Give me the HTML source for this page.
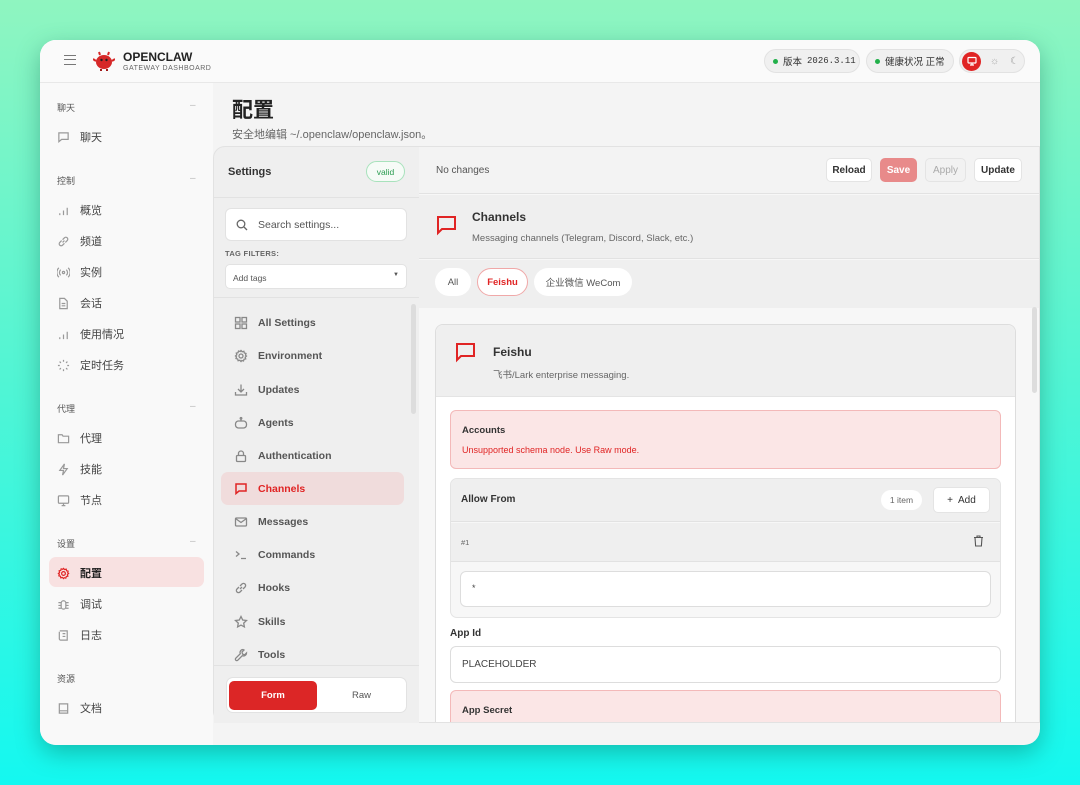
<!DOCTYPE html>
<html><head><meta charset="utf-8"><style>
*{box-sizing:border-box;margin:0;padding:0}
body{width:1080px;height:785px;overflow:hidden;background:linear-gradient(180deg,#8ff5c0 0%,#4ff5d5 50%,#14f8f0 100%);font-family:"Liberation Sans","Noto Sans CJK SC",sans-serif;position:relative}
.win{position:absolute;left:40px;top:40px;width:1000px;height:705px;background:#f4f4f4;border-radius:16px;overflow:hidden;box-shadow:0 8px 24px rgba(0,80,60,.35)}
.hdr{position:absolute;left:0;top:0;width:1000px;height:43px;background:#fafafa;border-bottom:1px solid #e8e8e8}
.side{position:absolute;left:0;top:-3px;width:173px;height:708px;background:#f9f9f9}
.a{position:absolute;white-space:nowrap}
.sec{font-size:9px;color:#555;left:17px}
.dash{left:150px;color:#bbb;font-size:10px}
.it{left:17px;font-size:11px;color:#444;display:flex;align-items:center;gap:10px}
.it svg{width:13px;height:13px;stroke:#999;fill:none;stroke-width:1.3}
.pill{position:absolute;height:24px;border-radius:12px;background:#f0f0f0;border:1px solid #e2e2e2;font-size:9.5px;color:#333;display:flex;align-items:center;padding:0 6px 0 8px;gap:5px;white-space:nowrap}
.dot{width:5px;height:5px;border-radius:50%;background:#22b04a;flex:none}
.btn{position:absolute;height:24px;border-radius:5px;background:#fff;border:1px solid #e4e4e4;font-size:10px;color:#333;display:flex;align-items:center;justify-content:center;font-weight:bold}
.nav{position:absolute;left:20px;font-size:10.5px;color:#555;display:flex;align-items:center;gap:10px;font-weight:bold}
.nav svg{width:14px;height:14px;stroke:#888;fill:none;stroke-width:1.3}
</style></head><body>
<div class="win">
<div class="side">
 <div class="a sec" style="top:64px">聊天</div><div class="a dash" style="top:63px">–</div>
 <div class="a it" style="top:92px"><svg viewBox="0 0 14 14"><path d="M2 2h10v7H5l-3 2.5z"/></svg>聊天</div>
 <div class="a sec" style="top:137px">控制</div><div class="a dash" style="top:136px">–</div>
 <div class="a it" style="top:165px"><svg viewBox="0 0 14 14"><path d="M3 12v-2M7 12V7M11 12V4"/></svg>概览</div>
 <div class="a it" style="top:196px"><svg viewBox="0 0 14 14"><path d="M6 8l2-2M5 6L3 8a2 2 0 003 3l2-2M9 8l2-2a2 2 0 00-3-3L6 5"/></svg>频道</div>
 <div class="a it" style="top:227px"><svg viewBox="0 0 14 14"><circle cx="7" cy="7" r="1.2"/><path d="M4 4a4 4 0 000 6M10 4a4 4 0 010 6M2 2a7 7 0 000 10M12 2a7 7 0 010 10"/></svg>实例</div>
 <div class="a it" style="top:258px"><svg viewBox="0 0 14 14"><path d="M3 1.5h5l3 3v8H3zM5 7h4M5 9.5h4"/></svg>会话</div>
 <div class="a it" style="top:289px"><svg viewBox="0 0 14 14"><path d="M3 12v-2M7 12V7M11 12V4"/></svg>使用情况</div>
 <div class="a it" style="top:320px"><svg viewBox="0 0 14 14"><path d="M7 1v2M7 11v2M1 7h2M11 7h2M2.8 2.8l1.4 1.4M9.8 9.8l1.4 1.4M2.8 11.2l1.4-1.4M9.8 4.2l1.4-1.4"/></svg>定时任务</div>
 <div class="a sec" style="top:365px">代理</div><div class="a dash" style="top:364px">–</div>
 <div class="a it" style="top:393px"><svg viewBox="0 0 14 14"><path d="M1.5 3h4l1 1.5h6v7h-11z"/></svg>代理</div>
 <div class="a it" style="top:424px"><svg viewBox="0 0 14 14"><path d="M8 1L3 8h4l-1 5 5-7H7z"/></svg>技能</div>
 <div class="a it" style="top:455px"><svg viewBox="0 0 14 14"><rect x="1.5" y="2" width="11" height="8" rx="1"/><path d="M7 10v2M5 12.5h4"/></svg>节点</div>
 <div class="a sec" style="top:500px">设置</div><div class="a dash" style="top:499px">–</div>
 <div class="a" style="left:9px;top:520px;width:155px;height:30px;border-radius:7px;background:#f8e1e1"></div>
 <div class="a it" style="top:528px;color:#222;font-weight:bold"><svg viewBox="0 0 14 14" style="stroke:#e02424"><circle cx="7" cy="7" r="2"/><path d="M7 1.5l1.2 1.3 1.7-.5.4 1.7 1.7.5-.5 1.7L12.5 7l-1.3 1.2.5 1.7-1.7.4-.5 1.7-1.7-.5L7 12.5l-1.2-1.3-1.7.5-.4-1.7-1.7-.5.5-1.7L1.5 7l1.3-1.2-.5-1.7 1.7-.4.5-1.7 1.7.5z"/></svg>配置</div>
 <div class="a it" style="top:559px"><svg viewBox="0 0 14 14"><rect x="4.5" y="3" width="5" height="9" rx="2.5"/><path d="M1.5 5h3M9.5 5h3M1.5 8h3M9.5 8h3M1.5 11h3M9.5 11h3"/></svg>调试</div>
 <div class="a it" style="top:590px"><svg viewBox="0 0 14 14"><path d="M3 2h8v10H4a1.5 1.5 0 01-1.5-1.5V3M6 5h3M6 8h3"/></svg>日志</div>
 <div class="a sec" style="top:635px">资源</div>
 <div class="a it" style="top:663px"><svg viewBox="0 0 14 14"><path d="M2.5 2h9v10h-9zM2.5 9.5h9"/></svg>文档</div>
</div>
<div class="hdr">
 <div class="a" style="left:24px;top:15px;width:12px;height:10px;border-top:1.5px solid #777;border-bottom:1.5px solid #777"><div style="margin-top:3px;border-top:1.5px solid #777"></div></div>
 <svg class="a" style="left:53px;top:10px" width="22" height="22" viewBox="0 0 22 22"><ellipse cx="11" cy="12" rx="8" ry="7" fill="#d62828"/><path d="M3 11 L0 9 M19 11 L22 9 M7 5 L6 2 M15 5 L16 2" stroke="#d62828" stroke-width="2"/><circle cx="8.5" cy="10" r="1.2" fill="#222"/><circle cx="13.5" cy="10" r="1.2" fill="#222"/><path d="M8 19 v2 M14 19 v2" stroke="#a01818" stroke-width="2"/></svg>
 <div class="a" style="left:83px;top:10px;font-size:12px;font-weight:bold;color:#222">OPENCLAW</div>
 <div class="a" style="left:83px;top:25px;font-size:7px;color:#666;letter-spacing:.5px">GATEWAY DASHBOARD</div>
 <div class="pill" style="left:724px;top:9px;width:96px"><span class="dot"></span><span>版本</span><span style="font-family:'Liberation Mono',monospace;font-size:9px">2026.3.11</span></div>
 <div class="pill" style="left:826px;top:9px;width:88px"><span class="dot"></span>健康状况&nbsp;正常</div>
 <div class="pill" style="left:919px;top:9px;width:66px;padding:0 2px">
  <div style="width:19px;height:19px;border-radius:50%;background:#e02424;display:flex;align-items:center;justify-content:center;flex:none"><svg width="10" height="10" viewBox="0 0 10 10" fill="none" stroke="#fff" stroke-width="1.2"><rect x="1" y="1.5" width="8" height="5.5" rx=".8"/><path d="M5 7v2M3 9h4"/></svg></div>
  <span style="color:#aaa;font-size:10px;margin-left:4px">☼</span><span style="color:#999;font-size:10px;margin-left:6px">☾</span></div>
</div>
<div class="a" style="left:192px;top:54px;font-size:21px;font-weight:bold;color:#222">配置</div>
<div class="a" style="left:192px;top:86px;font-size:11px;color:#666">安全地编辑 ~/.openclaw/openclaw.json。</div>
<!-- settings panel -->
<div class="a" style="left:173px;top:106px;width:207px;height:577px;background:#efefef;border:1px solid #e2e2e2;border-radius:12px 0 0 12px">
 <div class="a" style="left:14px;top:19px;font-size:11px;color:#333;font-weight:bold">Settings</div>
 <div class="a" style="left:152px;top:14px;width:39px;height:21px;border:1px solid #a8e2bc;border-radius:11px;font-size:8.5px;color:#2a9c50;display:flex;align-items:center;justify-content:center;background:#f6fbf7">valid</div>
 <div class="a" style="left:0;top:50px;width:205px;border-top:1px solid #e2e2e2"></div>
 <div class="a" style="left:11px;top:61px;width:182px;height:33px;background:#fff;border:1px solid #e2e2e2;border-radius:6px;display:flex;align-items:center;padding-left:10px;gap:10px;font-size:10.5px;color:#555"><svg width="12" height="12" viewBox="0 0 12 12" fill="none" stroke="#666" stroke-width="1.3"><circle cx="5" cy="5" r="3.8"/><path d="M8 8l3 3"/></svg>Search settings...</div>
 <div class="a" style="left:11px;top:102px;font-size:7.5px;color:#666;font-weight:bold;letter-spacing:.3px">TAG FILTERS:</div>
 <div class="a" style="left:11px;top:117px;width:182px;height:25px;background:#fff;border:1px solid #e2e2e2;border-radius:5px;font-size:8.5px;color:#555;padding:8px 7px">Add tags<span style="position:absolute;right:7px;top:7px;font-size:6px">▼</span></div>
 <div class="a" style="left:0;top:150px;width:205px;border-top:1px solid #e2e2e2"></div>
 <div class="a" style="left:197px;top:157px;width:5px;height:110px;background:#ddd;border-radius:3px"></div>
 <div class="nav" style="top:169px"><svg viewBox="0 0 14 14"><rect x="1.5" y="1.5" width="4.5" height="4.5"/><rect x="8" y="1.5" width="4.5" height="4.5"/><rect x="1.5" y="8" width="4.5" height="4.5"/><rect x="8" y="8" width="4.5" height="4.5"/></svg>All Settings</div>
 <div class="nav" style="top:202px"><svg viewBox="0 0 14 14"><circle cx="7" cy="7" r="2"/><path d="M7 1.5l1.2 1.3 1.7-.5.4 1.7 1.7.5-.5 1.7L12.5 7l-1.3 1.2.5 1.7-1.7.4-.5 1.7-1.7-.5L7 12.5l-1.2-1.3-1.7.5-.4-1.7-1.7-.5.5-1.7L1.5 7l1.3-1.2-.5-1.7 1.7-.4.5-1.7 1.7.5z"/></svg>Environment</div>
 <div class="nav" style="top:236px"><svg viewBox="0 0 14 14"><path d="M7 1.5v7M4 6l3 3 3-3M1.5 9v3h11V9"/></svg>Updates</div>
 <div class="nav" style="top:269px"><svg viewBox="0 0 14 14"><rect x="1.5" y="5" width="11" height="7" rx="3"/><path d="M7 5V3"/><circle cx="7" cy="2.3" r=".8"/></svg>Agents</div>
 <div class="nav" style="top:302px"><svg viewBox="0 0 14 14"><rect x="2.5" y="6.5" width="9" height="6" rx="1"/><path d="M4.5 6.5V4.5a2.5 2.5 0 015 0v2"/></svg>Authentication</div>
 <div class="a" style="left:7px;top:325px;width:183px;height:33px;background:#f0dcdc;border-radius:7px"></div>
 <div class="nav" style="top:335px;color:#e02424"><svg viewBox="0 0 14 14" style="stroke:#e02424;stroke-width:1.5"><path d="M2 2h10v7H5l-3 2.5z"/></svg>Channels</div>
 <div class="nav" style="top:368px"><svg viewBox="0 0 14 14"><rect x="1.5" y="3" width="11" height="8" rx="1"/><path d="M1.5 3.5L7 7.5l5.5-4"/></svg>Messages</div>
 <div class="nav" style="top:401px"><svg viewBox="0 0 14 14"><path d="M2 3.5l3 2.5-3 2.5M7 10.5h5"/></svg>Commands</div>
 <div class="nav" style="top:434px"><svg viewBox="0 0 14 14"><path d="M6 8l2-2M5 6L3 8a2 2 0 003 3l2-2M9 8l2-2a2 2 0 00-3-3L6 5"/></svg>Hooks</div>
 <div class="nav" style="top:468px"><svg viewBox="0 0 14 14"><path d="M7 1.5l1.7 3.5 3.8.5-2.8 2.6.7 3.8L7 10.1 3.6 11.9l.7-3.8L1.5 5.5l3.8-.5z"/></svg>Skills</div>
 <div class="nav" style="top:501px"><svg viewBox="0 0 14 14"><path d="M9 1.5a3 3 0 00-2.7 4.2L1.8 10.2a1.3 1.3 0 002 2l4.5-4.5A3 3 0 0012.5 5l-2 2-2-1-.5-2 2-2z"/></svg>Tools</div>
 <div class="a" style="left:0;top:518px;width:205px;height:58px;background:#efefef;border-top:1px solid #e2e2e2"></div>
 <div class="a" style="left:12px;top:530px;width:181px;height:36px;background:#fff;border:1px solid #e2e2e2;border-radius:7px"></div>
 <div class="a" style="left:15px;top:534px;width:88px;height:29px;background:#dc2626;border-radius:5px;color:#fff;font-size:9.5px;font-weight:bold;display:flex;align-items:center;justify-content:center">Form</div>
 <div class="a" style="left:105px;top:534px;width:85px;height:29px;color:#555;font-size:9.5px;display:flex;align-items:center;justify-content:center">Raw</div>
</div>
<!-- right panel -->
<div class="a" style="left:379px;top:106px;width:621px;height:577px;background:#f7f7f7;border:1px solid #e2e2e2;border-left:none;overflow:hidden">
 <div class="a" style="left:0;top:0;width:621px;height:47px;background:#f3f3f3;border-bottom:1px solid #e2e2e2"></div>
 <div class="a" style="left:17px;top:18px;font-size:10px;color:#555">No changes</div>
 <div class="btn" style="left:407px;top:11px;width:46px">Reload</div>
 <div class="btn" style="left:461px;top:11px;width:37px;background:#e88a8a;border-color:#e88a8a;color:#fff">Save</div>
 <div class="btn" style="left:506px;top:11px;width:41px;background:#f2f2f2;color:#aaa;font-weight:normal">Apply</div>
 <div class="btn" style="left:555px;top:11px;width:48px">Update</div>
 <div class="a" style="left:0;top:48px;width:621px;height:64px;background:#efefef;border-bottom:1px solid #e2e2e2"></div>
 <svg class="a" style="left:17px;top:68px" width="22" height="22" viewBox="0 0 22 22" fill="none" stroke="#e02424" stroke-width="2"><path d="M2 2h17v12H6l-4 4z"/></svg>
 <div class="a" style="left:53px;top:63px;font-size:12px;color:#333;font-weight:bold">Channels</div>
 <div class="a" style="left:53px;top:86px;font-size:9.5px;color:#666">Messaging channels (Telegram, Discord, Slack, etc.)</div>
 <div class="a" style="left:0;top:113px;width:621px;height:48px;background:#efefef"></div>
 <div class="a" style="left:16px;top:121px;width:36px;height:28px;border-radius:14px;background:#fff;font-size:9.5px;color:#555;display:flex;align-items:center;justify-content:center">All</div>
 <div class="a" style="left:58px;top:121px;width:51px;height:28px;border-radius:14px;background:#fff;border:1px solid #f0a8a8;font-size:9.5px;color:#e02424;font-weight:bold;display:flex;align-items:center;justify-content:center">Feishu</div>
 <div class="a" style="left:115px;top:121px;width:98px;height:28px;border-radius:14px;background:#fff;font-size:9.5px;color:#555;display:flex;align-items:center;justify-content:center">企业微信 WeCom</div>
 <div class="a" style="left:613px;top:160px;width:5px;height:86px;background:#ddd;border-radius:3px"></div>
 <div class="a" style="left:16px;top:177px;width:581px;height:420px;background:#fff;border:1px solid #ddd;border-radius:8px;overflow:hidden">
  <div class="a" style="left:0;top:0;width:581px;height:72px;background:#efefef;border-bottom:1px solid #e4e4e4"></div>
  <svg class="a" style="left:19px;top:17px" width="22" height="22" viewBox="0 0 22 22" fill="none" stroke="#e02424" stroke-width="2"><path d="M2 2h17v12H6l-4 4z"/></svg>
  <div class="a" style="left:57px;top:20px;font-size:12px;color:#333;font-weight:bold">Feishu</div>
  <div class="a" style="left:57px;top:42px;font-size:9.5px;color:#666">飞书/Lark enterprise messaging.</div>
  <div class="a" style="left:14px;top:85px;width:551px;height:59px;background:#fbe6e6;border:1px solid #f3b9b9;border-radius:6px">
   <div class="a" style="left:11px;top:14px;font-size:9.5px;color:#333;font-weight:bold">Accounts</div>
   <div class="a" style="left:11px;top:34px;font-size:9px;color:#e02424">Unsupported schema node. Use Raw mode.</div>
  </div>
  <div class="a" style="left:14px;top:153px;width:551px;height:140px;background:#f7f7f7;border:1px solid #e4e4e4;border-radius:7px;overflow:hidden">
   <div class="a" style="left:0;top:0;width:551px;height:43px;background:#efefef;border-bottom:1px solid #e2e2e2"></div>
   <div class="a" style="left:10px;top:15px;font-size:10px;color:#333;font-weight:bold">Allow From</div>
   <div class="a" style="left:430px;top:11px;width:41px;height:20px;border-radius:10px;background:#fff;font-size:8.5px;color:#666;display:flex;align-items:center;justify-content:center">1 item</div>
   <div class="btn" style="left:482px;top:8px;width:57px;height:26px;font-weight:normal;font-size:10px">+&nbsp; Add</div>
   <div class="a" style="left:0;top:44px;width:551px;height:39px;background:#efefef;border-bottom:1px solid #e2e2e2"></div>
   <div class="a" style="left:10px;top:59px;font-size:7.5px;color:#666">#1</div>
   <svg class="a" style="left:522px;top:56px" width="11" height="12" viewBox="0 0 11 12" fill="none" stroke="#555" stroke-width="1.1"><path d="M1 2.5h9M4 2.5V1h3v1.5M2 2.5l.6 8.5h5.8l.6-8.5"/></svg>
   <div class="a" style="left:9px;top:92px;width:531px;height:36px;background:#fff;border:1px solid #ddd;border-radius:6px;font-size:9px;color:#444;padding:11px 11px">*</div>
  </div>
  <div class="a" style="left:14px;top:303px;font-size:10px;color:#333;font-weight:bold">App Id</div>
  <div class="a" style="left:14px;top:321px;width:551px;height:37px;background:#fff;border:1px solid #ddd;border-radius:6px;font-size:10px;color:#444;padding:12px 11px">PLACEHOLDER</div>
  <div class="a" style="left:14px;top:365px;width:551px;height:60px;background:#fbe6e6;border:1px solid #f3b9b9;border-radius:6px">
   <div class="a" style="left:11px;top:14px;font-size:9.5px;color:#333;font-weight:bold">App Secret</div>
  </div>
 </div>
</div>
</div>
</body></html>
